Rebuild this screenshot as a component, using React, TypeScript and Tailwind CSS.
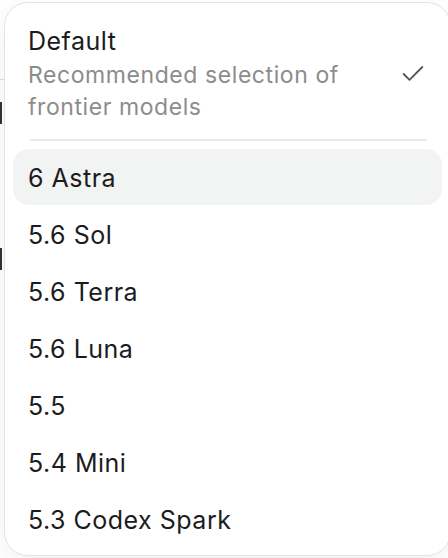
import React from 'react';
import { Check } from 'lucide-react';

const models = ['6 Astra', '5.6 Sol', '5.6 Terra', '5.6 Luna', '5.5', '5.4 Mini', '5.3 Codex Spark'];

const MenuItem: React.FC<{ label: string; active?: boolean }> = ({ label, active }) => (
    <div
        className={`h-14 flex items-center pl-[15px] pr-[17px] pt-[3px] rounded-2xl text-[25px] tracking-[0.02em] text-[#1c1c1e] ${active ? 'bg-[#f2f3f3]' : ''}`}
    >
        {label}
    </div>
);

export default function App() {
    return (
        <div className="relative w-[448px] h-[558px] overflow-hidden bg-white" style={{ fontFamily: 'Inter, "Noto Sans", sans-serif' }}>
            {/* bits of the page behind the menu */}
            <div className="absolute left-0 top-[102px] w-[2px] h-[22px] bg-[#333]" />
            <div className="absolute left-0 top-[248px] w-[2px] h-[22px] bg-[#333]" />
            <div className="absolute left-0 top-[79px] w-2 h-px bg-[#dcdcdc]" />

            {/* model menu */}
            <div className="absolute left-1 top-[2px] w-[447px] h-[554px] bg-white rounded-[24px] border border-[#e3e3e3] shadow-[0_8px_30px_rgba(0,0,0,0.06)] p-2 pt-[22px]">
                <div className="flex items-center pl-[15px] pr-[15px]">
                    <div className="flex-1">
                        <div className="text-[25px] tracking-[0.02em] leading-8 text-[#1c1c1e]">Default</div>
                        <div className="mt-[2px] text-[23px] tracking-[0.025em] leading-8 text-[#8c8c8c] w-[340px]">
                            Recommended selection of frontier models
                        </div>
                    </div>
                    <Check className="w-7 h-7 text-[#555555]" strokeWidth={1.6} />
                </div>
                <div className="mt-[16px] ml-[17px] mr-[15px] h-[2px] bg-[#e9e9e9]" />
                <div className="mt-2 flex flex-col gap-px">
                    {models.map((m, i) => (
                        <MenuItem key={m} label={m} active={i === 0} />
                    ))}
                </div>
            </div>
        </div>
    );
}
